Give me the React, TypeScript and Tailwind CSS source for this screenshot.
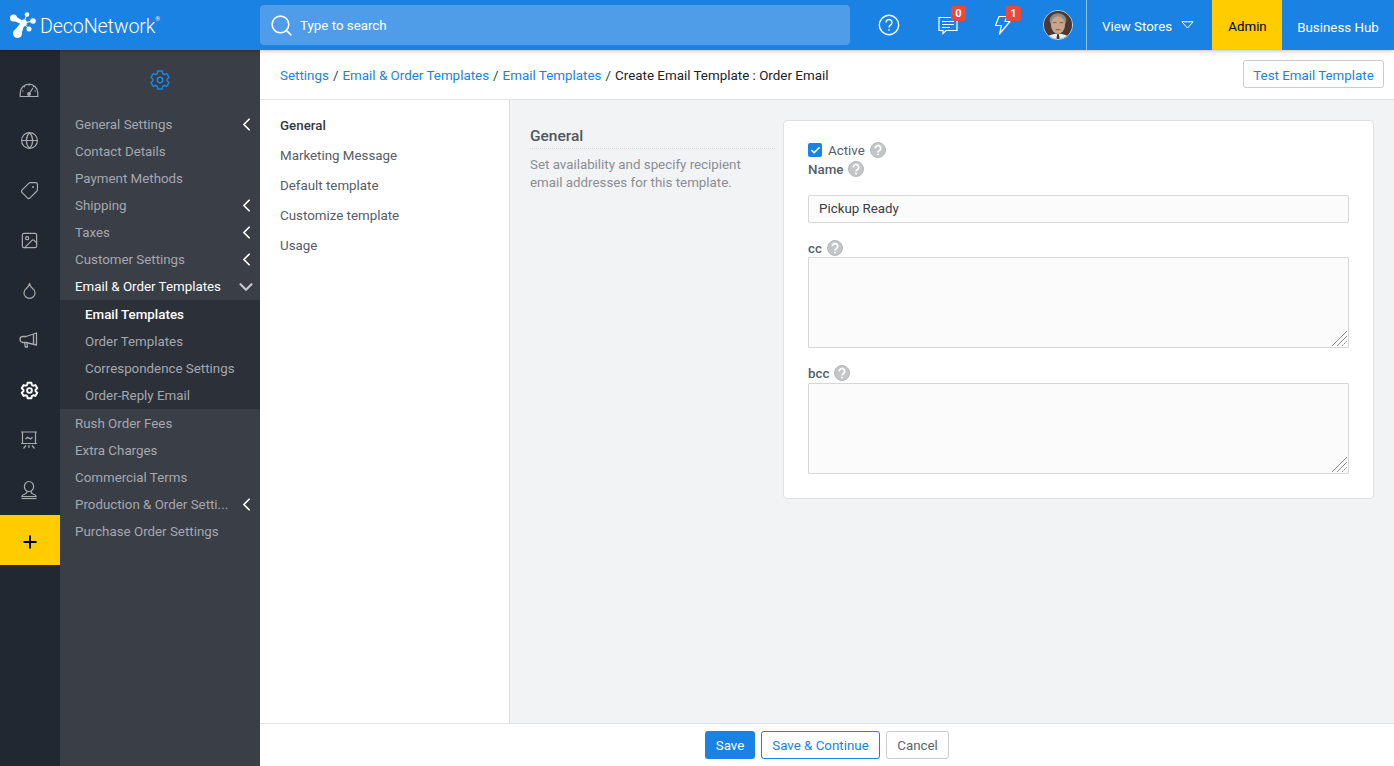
import { ReactNode } from "react";
import { ChevronDown, ChevronLeft, Globe, Image, Droplet, Plus, Search, Tag, Check } from "lucide-react";

const Gear = ({ className, size = 19, stroke = 1.8 }: { className?: string; size?: number; stroke?: number }) => (
  <svg width={size} height={size} viewBox="0 0 24 24" fill="none" stroke="currentColor" strokeWidth={stroke} strokeLinejoin="round" className={className}>
    <path d="M9.600 2.200h4.800l.6 2.900 1.600.9 2.800-.9 2.400 4.100-2.200 2 .1.800-.1.800 2.200 2-2.400 4.100-2.800-.9-1.600.9-.6 2.900H9.600L9 18.900l-1.600-.9-2.800.9-2.400-4.100 2.200-2-.1-.8.1-.8-2.200-2 2.400-4.100 2.800.9L9 5.100z" />
    <circle cx="12" cy="12" r="3" />
  </svg>
);

const Speedo = () => (
  <svg width="20" height="20" viewBox="0 0 20 20" fill="none" stroke="currentColor" strokeWidth="1.2">
    <path d="M1.200 16.500v-3.500a8.800 8.800 0 0 1 17.600 0v3.500z" />
    <path d="M10 4.200v1.600M5 6l1 1.200M15 6l-1 1.200M3 11h1.600M17 11h-1.600M14 8l-3.400 5" />
    <circle cx="10" cy="14" r="1.300" fill="currentColor" />
  </svg>
);

const Megaphone = () => (
  <svg width="20" height="20" viewBox="0 0 20 20" fill="none" stroke="currentColor" strokeWidth="1.3" strokeLinejoin="round">
    <path d="M7 6.500 17.500 3v12L7 12.500H4a2.800 2.800 0 0 1 0-6z" />
    <path d="M14.500 4v10M5.500 12.500l.8 4.500h2.200l-.7-4.500" />
  </svg>
);

const Board = () => (
  <svg width="20" height="20" viewBox="0 0 20 20" fill="none" stroke="currentColor" strokeWidth="1.2">
    <path d="M2 2h16M3.500 2v11.500h13V2M2 13.500h16M7 15.500 4.500 18.500M13 15.500l2.500 3M10 15v3" />
    <path d="m6.500 9 2-1.800 3 1.800 2-1.800" />
  </svg>
);

const Person = () => (
  <svg width="20" height="20" viewBox="0 0 20 20" fill="none" stroke="currentColor" strokeWidth="1.2">
    <ellipse cx="10" cy="6.500" rx="4.600" ry="5" />
    <path d="M7.800 11v1.500c0 .8-.7 1.200-2.300 1.700-1.600.5-2.700 1-2.700 2.300h14.400c0-1.300-1.100-1.800-2.700-2.300-1.600-.5-2.300-.9-2.300-1.700V11" />
    <path d="M2.500 18.500h15" />
  </svg>
);

const Logo = () => (
  <svg width="27" height="27" viewBox="0 0 27 27" fill="#fff" stroke="none">
    <circle cx="3.500" cy="7" r="3.500" />
    <circle cx="17" cy="3.500" r="2.300" />
    <circle cx="23" cy="10" r="2.800" />
    <circle cx="13.500" cy="12" r="3.400" />
    <circle cx="19" cy="18" r="2.500" />
    <circle cx="7.500" cy="22.500" r="4.500" />
    <path d="M5 5 13 10l-1 3.500L3 9.500zM4.500 19.500 11.500 11l3 2.500-3 9z" />
    <path d="M13.500 12 17 3.500M13.500 12 23 10M13.500 12 19 18" stroke="#fff" strokeWidth="1" />
  </svg>
);

const Avatar = () => (
  <svg width="30" height="30" viewBox="0 0 30 30" className="rounded-full border border-[#cfd8e3]">
    <rect width="30" height="30" fill="#4a3a36" />
    <path d="M3 30c1-4 6-5.500 12-5.500S26 26 27 30z" fill="#eeeeee" />
    <path d="M14 25h2l.6 5h-3.200z" fill="#333" />
    <ellipse cx="15" cy="10" rx="9" ry="7.500" fill="#8e8984" />
    <ellipse cx="15" cy="15" rx="7.500" ry="9.500" fill="#c9a58c" />
    <path d="M9.500 12.500h4M16.500 12.500h4M12.500 20h5" stroke="#7a5a4a" strokeWidth="1" />
  </svg>
);

const Help = () => (
  <svg width="16" height="16" viewBox="0 0 16 16" fill="none">
    <circle cx="8" cy="8" r="7.500" fill="#c3c6c7" stroke="#b4b7b9" />
    <path d="M5.300 6.300a2.700 2.700 0 1 1 4.200 2.200c-.8.500-1.500 1-1.500 2" stroke="#fff" strokeWidth="1.800" />
    <circle cx="8" cy="12.500" r="1" fill="#fff" />
  </svg>
);

const Label = ({ children, medium }: { children: ReactNode; medium?: boolean }) => (
  <span className={`flex h-[18px] items-center gap-[5px] text-[13.33px] text-[#55606c] ${medium ? "font-medium" : ""}`}>
    <span className="pt-[2px] leading-[16px]">{children}</span>
    <Help />
  </span>
);

const Badge = ({ n }: { n: number }) => (
  <span className="absolute -top-[9px] left-[13px] flex h-[15px] w-[15px] items-center justify-center rounded-[3px] bg-[#e8493c] text-[11px] font-bold leading-none text-white">
    {n}
  </span>
);

const Grip = () => (
  <svg width="15" height="15" viewBox="0 0 15 15" fill="none" stroke="#8a8a8a" className="pointer-events-none absolute bottom-[2px] right-[2px]">
    <path d="M0 15 15 0M5 15 15 5" />
    <path d="M10 15l5-5" strokeDasharray="2 1" />
  </svg>
);

const Area = () => (
  <div className="relative">
    <textarea className="block h-[91px] w-full resize-none rounded-[1px] border border-[#d6d7d9] bg-[#fbfbfb]" />
    <Grip />
  </div>
);

const MenuItem = ({
  label,
  arrow,
  active,
}: {
  label: string;
  arrow?: boolean;
  active?: boolean;
}) => (
  <div className={`flex h-[27px] items-center justify-between pl-[15px] pr-[3px] text-[13.33px] ${active ? "text-white" : "text-[#a5a8ae]"}`}>
    <span>{label}</span>
    {arrow && !active && <ChevronLeft size={21} strokeWidth={2} className="text-white" />}
    {active && <ChevronDown size={22} strokeWidth={2.4} className="text-[#c5c7cb]" />}
  </div>
);

const SubItem = ({ label, active }: { label: string; active?: boolean }) => (
  <div className={`flex h-[27px] items-center pl-[25px] text-[13.33px] ${active ? "font-medium text-white" : "text-[#a5a8ae]"}`}>
    {label}
  </div>
);

const railIcons = [
  <Speedo />,
  <Globe size={19} strokeWidth={1.5} />,
  <Tag size={19} strokeWidth={1.5} className="rotate-90" />,
  <Image size={19} strokeWidth={1.5} />,
  <Droplet size={19} strokeWidth={1.5} />,
  <Megaphone />,
  <Gear className="text-white" stroke={2.4} />,
  <Board />,
  <Person />,
];

export default function App() {
  return (
    <div className="flex h-[766px] w-[1394px] flex-col overflow-hidden bg-white font-['Roboto',sans-serif] text-[13.33px]">
      <header className="relative z-10 flex h-[50px] shrink-0 items-center bg-[#1a82e2] shadow-[0_1px_4px_rgba(0,0,0,0.25)]">
        <div className="flex w-[260px] items-center pl-[10px] text-white">
          <Logo />
          <span className="ml-[3px] pt-[3px] text-[19.7px] font-light tracking-[-0.15px]">DecoNetwork</span>
          <span className="mb-[12px] text-[6px]">®</span>
        </div>
        <div className="flex h-[40px] w-[590px] items-center rounded-[4px] bg-[#4f9de9] pl-[9px] text-[13.33px] text-white">
          <Search size={25} strokeWidth={1.5} />
          <span className="ml-[6px] pt-[2px]">Type to search</span>
        </div>
        <div className="flex h-full flex-1 items-center text-white">
          <svg width="22" height="22" viewBox="0 0 22 22" fill="none" stroke="currentColor" strokeWidth="1.4" className="ml-[28px]">
            <circle cx="11" cy="11" r="9.700" />
            <path d="M8 8.500a3 3 0 1 1 4.500 2.600c-1 .6-1.500 1.200-1.500 2.400M11 15.200v1.500" />
          </svg>
          <span className="relative ml-[38px] block h-[20px] w-[20px]">
            <svg width="20" height="20" viewBox="0 0 20 20" fill="none" stroke="currentColor" strokeWidth="1.2">
              <path d="M1 2.500h18v13h-11l-3 3v-3H1zM4 6.500h12M4 9.500h12M4 12.500h8" />
            </svg>
            <Badge n={0} />
          </span>
          <span className="relative ml-[35px] block h-[20px] w-[20px]">
            <svg width="20" height="20" viewBox="0 0 20 20" fill="none" stroke="currentColor" strokeWidth="1.2" strokeLinejoin="round">
              <path d="M6 1.500h8l-2 5h5L6.500 19l2-8.500H2.500z" />
            </svg>
            <Badge n={1} />
          </span>
          <span className="ml-[30px] block h-[30px] w-[30px]">
            <Avatar />
          </span>
          <div className="ml-[13px] flex h-full w-[126px] items-center border-l border-[#8fc0ef] pl-[15px]">
            <span className="pt-[4px]">View Stores</span>
            <svg width="13" height="8" viewBox="0 0 13 8" fill="none" stroke="currentColor" strokeWidth="1" className="ml-[9px]">
              <path d="M.8.800h11.400L6.500 7z" />
            </svg>
          </div>
          <div className="flex h-full w-[70px] items-center justify-center bg-[#ffcc00] pl-px pt-[3px] text-black">Admin</div>
          <div className="flex h-full flex-1 items-center justify-center pt-[5px]">Business Hub</div>
        </div>
      </header>

      <div className="flex min-h-0 flex-1">
        <nav className="flex w-[60px] shrink-0 flex-col bg-[#222832] pt-[15px]">
          {railIcons.map((icon, i) => (
            <div key={i} className="flex h-[50px] items-center justify-center pr-[2px] text-[#a9abae]">
              {icon}
            </div>
          ))}
          <div className="flex h-[50px] items-center justify-center bg-[#ffcc00] pt-[4px] text-black">
            <Plus size={20} strokeWidth={2.4} />
          </div>
        </nav>

        <aside className="w-[200px] shrink-0 bg-[#3a3e47]">
          <div className="flex h-[61px] items-start justify-center pt-[19px] text-[#1a86ec]">
            <Gear size={22} stroke={1.6} />
          </div>
          <MenuItem label="General Settings" arrow />
          <MenuItem label="Contact Details" />
          <MenuItem label="Payment Methods" />
          <MenuItem label="Shipping" arrow />
          <MenuItem label="Taxes" arrow />
          <MenuItem label="Customer Settings" arrow />
          <MenuItem label="Email & Order Templates" active />
          <div className="mb-px bg-[#2c3038] pt-px">
            <SubItem label="Email Templates" active />
            <SubItem label="Order Templates" />
            <SubItem label="Correspondence Settings" />
            <SubItem label="Order-Reply Email" />
          </div>
          <MenuItem label="Rush Order Fees" />
          <MenuItem label="Extra Charges" />
          <MenuItem label="Commercial Terms" />
          <MenuItem label="Production & Order Setti..." arrow />
          <MenuItem label="Purchase Order Settings" />
        </aside>

        <div className="flex min-w-0 flex-1 flex-col">
          <div className="flex h-[50px] shrink-0 items-center justify-between border-b border-[#e2e3e5] pl-[20px] pr-[10px]">
            <div className="flex items-center gap-[4px] pt-[4px] text-[13.4px] text-[#3a3e47]">
              <span className="text-[#1a82e2]">Settings</span>
              <span>/</span>
              <span className="text-[#1a82e2]">Email & Order Templates</span>
              <span>/</span>
              <span className="text-[#1a82e2]">Email Templates</span>
              <span>/</span>
              <span className="text-[#222]">Create Email Template : Order Email</span>
            </div>
            <button className="mb-px h-[28px] w-[141px] rounded-[3px] border border-[#c9ccd1] pt-[4px] text-[13.33px] text-[#1a82e2]">
              Test Email Template
            </button>
          </div>

          <div className="flex min-h-0 flex-1">
            <div className="flex w-[250px] shrink-0 flex-col border-r border-[#dcdde0] pl-[20px] pt-[11px] text-[13.33px] text-[#555c66]">
              <div className="flex h-[30px] items-center font-medium text-[#33383f]">General</div>
              <div className="flex h-[30px] items-center">Marketing Message</div>
              <div className="flex h-[30px] items-center">Default template</div>
              <div className="flex h-[30px] items-center">Customize template</div>
              <div className="flex h-[30px] items-center">Usage</div>
            </div>

            <main className="flex min-w-0 flex-1 items-start bg-[#f2f3f5] pl-[20px] pr-[20px] pt-[20px]">
              <div className="w-[245px] shrink-0 pt-[6px]">
                <h2 className="border-b border-dotted border-[#d5d6d8] pb-[2px] text-[15.5px] font-medium leading-[20px] text-[#50565e]">General</h2>
                <p className="mt-[7px] pr-[20px] text-[13.33px] leading-[18px] text-[#8a8e94]">
                  Set availability and specify recipient email addresses for this template.
                </p>
              </div>
              <div className="ml-[8px] h-[379px] w-[591px] shrink-0 rounded-[4px] border border-[#e0e1e3] bg-white pl-[24px] pr-[24px] pt-[20px]">
                <div className="flex h-[18px] items-center gap-[6px]">
                  <span className="flex h-[14px] w-[14px] items-center justify-center rounded-[2px] bg-[#1a82e2] text-white">
                    <Check size={11} strokeWidth={3.5} />
                  </span>
                  <Label>Active</Label>
                </div>
                <div className="mt-px">
                  <Label medium>Name</Label>
                </div>
                <div className="mt-[17px] flex h-[28px] items-center rounded-[2px] border border-[#d6d7d9] bg-[#fbfbfb] pl-[10px] text-[13.33px] text-[#3a3e47]">
                  Pickup Ready
                </div>
                <div className="mt-[16px]">
                  <Label medium>cc</Label>
                </div>
                <Area />
                <div className="mt-[16px] mb-px">
                  <Label medium>bcc</Label>
                </div>
                <Area />
              </div>
            </main>
          </div>

          <footer className="flex h-[43px] shrink-0 items-center justify-center gap-[6px] border-t border-[#e2e3e5] text-[13.33px]">
            <button className="h-[28px] w-[50px] rounded-[3px] bg-[#1a82e2] pt-[2px] text-white">Save</button>
            <button className="h-[28px] w-[119px] rounded-[3px] border border-[#1a82e2] pt-[2px] text-[#1a82e2]">Save & Continue</button>
            <button className="h-[28px] w-[63px] rounded-[3px] border border-[#c9ccd1] pt-[2px] text-[#5d6369]">Cancel</button>
          </footer>
        </div>
      </div>
    </div>
  );
}
